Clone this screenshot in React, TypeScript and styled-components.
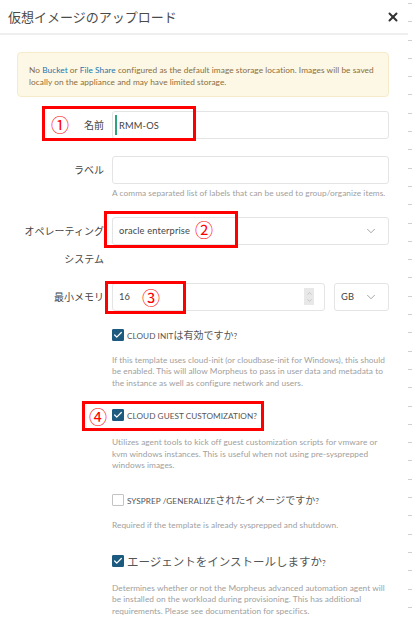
import React from 'react'
import styled, { createGlobalStyle } from 'styled-components'
import { ChevronDown, ChevronUp, Check, X } from 'lucide-react'

const GlobalStyle = createGlobalStyle`
  body {
    margin: 0;
    background: #fff;
    font-family: Lato, "Noto Sans CJK JP", sans-serif;
    color: #555;
  }
`

const Page = styled.div`
  display: flex;
  width: 412px;
  height: 624px;
  overflow: hidden;
`

const Modal = styled.div`
  width: 408px;
  display: flex;
  flex-direction: column;
`

const Strip = styled.div`
  width: 4px;
  background: repeating-linear-gradient(
    to bottom,
    transparent 0px,
    transparent 3px,
    #cfcfcf 3px,
    #cfcfcf 4px,
    transparent 4px,
    transparent 18.3px
  );
`

const Header = styled.div`
  height: 33px;
  display: flex;
  align-items: center;
  justify-content: space-between;
  padding: 0 8px;
  border-bottom: 2px solid #eeeeee;
`

const Title = styled.h1`
  margin: 0;
  font-family: "Noto Sans CJK JP", sans-serif;
  font-weight: 400;
  font-size: 13px;
  color: #4a4a4a;
`

const Close = styled.button`
  border: none;
  background: none;
  padding: 0;
  display: flex;
  color: #333;
`

const Body = styled.div`
  padding: 17px 19px 0 17px;
  display: flex;
  flex-direction: column;
`

const Alert = styled.div`
  background: #fdf8e6;
  border: 1px solid #f6ebc8;
  border-radius: 4px;
  padding: 12px 8px 8px 11px;
  font-size: 8.3px;
  letter-spacing: 0.05px;
  line-height: 11.5px;
  color: #8a6d3b;
`

const Link = styled.a`
  color: #2176ae;
  text-decoration: none;
`

const Row = styled.div<{ $mt: number }>`
  position: relative;
  display: flex;
  align-items: flex-start;
  gap: 8px;
  margin-top: ${(p) => p.$mt}px;
`

const Label = styled.label`
  width: 87px;
  flex-shrink: 0;
  text-align: right;
  font-family: "Noto Sans CJK JP", sans-serif;
  font-size: 10px;
  line-height: 28px;
  color: #444;
`

const Control = styled.div`
  flex: 1;
  display: flex;
  gap: 9px;
`

const Field = styled.div<{ $focus?: boolean; $w?: number }>`
  position: relative;
  box-sizing: border-box;
  height: 28px;
  ${(p) => (p.$w ? `width: ${p.$w}px; flex-shrink: 0;` : 'flex: 1;')}
  border: 1px solid #e4e4e4;
  border-radius: 3px;
  background: #fff;
  display: flex;
  align-items: center;
  padding: 0 10px 0 6px;
  font-size: 9.3px;
  letter-spacing: 0.15px;
  color: #444;
  &::before {
    content: '';
    display: ${(p) => (p.$focus ? 'block' : 'none')};
    position: absolute;
    left: 2px;
    top: 3px;
    bottom: 3px;
    width: 2px;
    background: #2fa37c;
  }
`

const FieldText = styled.span`
  flex: 1;
`

const Chevron = styled(ChevronDown)`
  color: #888;
`

const Spinner = styled.div`
  width: 10px;
  height: 17px;
  background: #e8e8e8;
  display: flex;
  flex-direction: column;
  align-items: center;
  justify-content: center;
  color: #999;
`

const Help = styled.div<{ $mt: number }>`
  margin-top: ${(p) => p.$mt}px;
  margin-left: 95px;
  font-size: 8.3px;
  letter-spacing: 0.05px;
  line-height: 11.7px;
  color: #a0a0a0;
`

const CheckRow = styled.div<{ $mt: number }>`
  position: relative;
  margin-top: ${(p) => p.$mt}px;
  margin-left: 95px;
  height: 14px;
  display: flex;
  align-items: center;
  gap: 3px;
`

const Box = styled.span<{ $on: boolean }>`
  box-sizing: border-box;
  width: 12px;
  height: 12px;
  border-radius: 1px;
  display: flex;
  align-items: center;
  justify-content: center;
  background: ${(p) => (p.$on ? '#1d5a7f' : '#fff')};
  border: 1px solid ${(p) => (p.$on ? '#1d5a7f' : '#c4c4c4')};
  color: #fff;
`

const CheckLabel = styled.span<{ $big?: boolean }>`
  font-family: "Noto Sans CJK JP", sans-serif;
  font-size: ${(p) => (p.$big ? 11.5 : 10)}px;
  color: #555;
  white-space: nowrap;
`

const Latin = styled.span`
  font-family: Lato, sans-serif;
  font-size: 8.2px;
  letter-spacing: 0.05px;
  text-transform: uppercase;
`

const Mark = styled.div<{ $l: number; $t: number; $w: number; $h: number }>`
  position: absolute;
  left: ${(p) => p.$l}px;
  top: ${(p) => p.$t}px;
  width: ${(p) => p.$w}px;
  height: ${(p) => p.$h}px;
  box-sizing: border-box;
  border: 3px solid #f00;
  pointer-events: none;
`

const Num = styled.span<{ $c: number }>`
  position: absolute;
  left: ${(p) => p.$c - 12}px;
  top: 50%;
  transform: translateY(-50%);
  font-family: "Noto Sans CJK JP", sans-serif;
  font-size: 18px;
  line-height: 18px;
  color: #f00;
`

export default function App() {
  return (
    <Page>
      <GlobalStyle />
      <Modal>
        <Header>
          <Title>仮想イメージのアップロード</Title>
          <Close aria-label="close">
            <X size={14} strokeWidth={3.4} />
          </Close>
        </Header>
        <Body>
          <Alert>
            No <Link>Bucket</Link> or <Link>File Share</Link> configured as the default image storage
            location. Images will be saved locally on the appliance and may have limited storage.
          </Alert>

          <Row $mt={14}>
            <Label>名前</Label>
            <Control>
              <Field $focus>
                <FieldText>RMM-OS</FieldText>
              </Field>
            </Control>
            <Mark $l={25} $t={-5} $w={154} $h={35}>
              <Num $c={18}>①</Num>
            </Mark>
          </Row>

          <Row $mt={17}>
            <Label>ラベル</Label>
            <Control>
              <Field />
            </Control>
          </Row>
          <Help $mt={4}>A comma separated list of labels that can be used to group/organize items.</Help>

          <Row $mt={17}>
            <Label>オペレーティングシステム</Label>
            <Control>
              <Field>
                <FieldText>oracle enterprise</FieldText>
                <Chevron size={14} strokeWidth={1.3} />
              </Field>
            </Control>
            <Mark $l={87} $t={-6} $w={134} $h={37}>
              <Num $c={100}>②</Num>
            </Mark>
          </Row>

          <Row $mt={10}>
            <Label>最小メモリ</Label>
            <Control>
              <Field>
                <FieldText>16</FieldText>
                <Spinner>
                  <ChevronUp size={7} strokeWidth={1.5} />
                  <ChevronDown size={7} strokeWidth={1.5} />
                </Spinner>
              </Field>
              <Field $w={55}>
                <FieldText>GB</FieldText>
                <Chevron size={14} strokeWidth={1.3} />
              </Field>
            </Control>
            <Mark $l={88} $t={-2} $w={81} $h={33}>
              <Num $c={46}>③</Num>
            </Mark>
          </Row>

          <CheckRow $mt={17}>
            <Box $on>
              <Check size={10} strokeWidth={3} />
            </Box>
            <CheckLabel>
              <Latin>Cloud Init</Latin>は有効ですか<Latin>?</Latin>
            </CheckLabel>
          </CheckRow>
          <Help $mt={13}>
            If this template uses cloud-init (or cloudbase-init for Windows), this should be enabled.
            This will allow Morpheus to pass in user data and metadata to the instance as well as
            configure network and users.
          </Help>

          <CheckRow $mt={18}>
            <Box $on>
              <Check size={10} strokeWidth={3} />
            </Box>
            <CheckLabel>
              <Latin>Cloud Guest Customization?</Latin>
            </CheckLabel>
            <Mark $l={-30} $t={-7} $w={182} $h={30}>
              <Num $c={16}>④</Num>
            </Mark>
          </CheckRow>
          <Help $mt={15}>
            Utilizes agent tools to kick off guest customization scripts for vmware or kvm windows
            instances. This is useful when not using pre-sysprepped windows images.
          </Help>

          <CheckRow $mt={21}>
            <Box $on={false} />
            <CheckLabel>
              <Latin>Sysprep /Generalize</Latin>されたイメージですか<Latin>?</Latin>
            </CheckLabel>
          </CheckRow>
          <Help $mt={13}>Required if the template is already sysprepped and shutdown.</Help>

          <CheckRow $mt={22}>
            <Box $on>
              <Check size={10} strokeWidth={3} />
            </Box>
            <CheckLabel $big>
              エージェントをインストールしますか<Latin>?</Latin>
            </CheckLabel>
          </CheckRow>
          <Help $mt={15}>
            Determines whether or not the Morpheus advanced automation agent will be installed on the
            workload during provisioning. This has additional requirements. Please see documentation
            for specifics.
          </Help>
        </Body>
      </Modal>
      <Strip />
    </Page>
  )
}
